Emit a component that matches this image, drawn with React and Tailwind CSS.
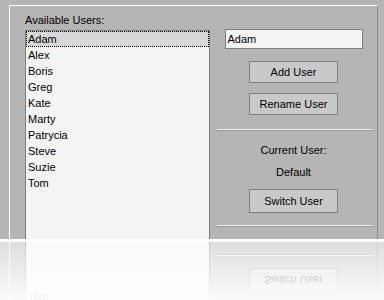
import React from "react";

const users = ["Adam", "Alex", "Boris", "Greg", "Kate", "Marty", "Patrycia", "Steve", "Suzie", "Tom"];

function Btn({ children, h = "h-[22px]", mt }) {
  return (
    <div className={`w-[89px] ${h} ${mt} border border-[#7f7f7f] bg-[#c9c9c9] flex items-center justify-center text-[11px] leading-[13px] text-black`}>
      {children}
    </div>
  );
}

function Sep({ mt }) {
  return <div className={`${mt} ml-[7px] self-start w-[156px] h-[2px] border-t border-t-[#f2f2f2] border-b border-b-[#959595]`} />;
}

function Scene() {
  return (
    <div className="w-[384px] h-[239px] bg-[#b5b5b5] pt-[5px] pl-[9px] pr-[6px] overflow-hidden" style={{ fontFamily: '"Liberation Sans", Arial, sans-serif' }}>
      <div className="h-[260px] border-t border-l border-r border-t-white border-l-white border-r-[#8c8c8c] flex pl-[15px]">
        <div className="w-[185px] flex flex-col">
          <div className="h-[24px] pt-[8px] text-[11px] leading-[13px] text-black">Available Users:</div>
          <div className="flex-1 border border-[#7c7c7c] bg-[#f4f4f4]">
            {users.map((u, i) => (
              <div
                key={u}
                className={
                  i === 0
                    ? "h-[16px] leading-[14px] pl-[1px] text-[11px] text-black bg-[#d8d8d8] border border-dotted border-black"
                    : "h-[16px] leading-[16px] pl-[2px] text-[11px] text-black"
                }
              >
                {u}
              </div>
            ))}
          </div>
        </div>
        <div className="flex-1 flex flex-col items-center">
          <div className="mt-[23px] w-[138px] h-[20px] border border-[#7f7f7f] bg-[#f4f4f4] pl-[2px] text-[11px] leading-[18px] text-black">Adam</div>
          <Btn mt="mt-[12px]">Add User</Btn>
          <Btn mt="mt-[10px]">Rename User</Btn>
          <Sep mt="mt-[14px]" />
          <div className="mt-[13px] text-[11px] leading-[13px] text-black">Current User:</div>
          <div className="mt-[9px] text-[11px] leading-[13px] text-black">Default</div>
          <Btn h="h-[24px]" mt="mt-[10px]">Switch User</Btn>
          <Sep mt="mt-[12px]" />
        </div>
      </div>
    </div>
  );
}

export default function App() {
  return (
    <div className="w-[384px] h-[300px] bg-white overflow-hidden">
      <Scene />
      <div className="h-[3px] bg-white" />
      <div className="relative h-[58px] overflow-hidden">
        <div className="-scale-y-100">
          <Scene />
        </div>
        <div className="absolute inset-0 bg-linear-to-b from-white/55 to-white/95" />
      </div>
    </div>
  );
}
